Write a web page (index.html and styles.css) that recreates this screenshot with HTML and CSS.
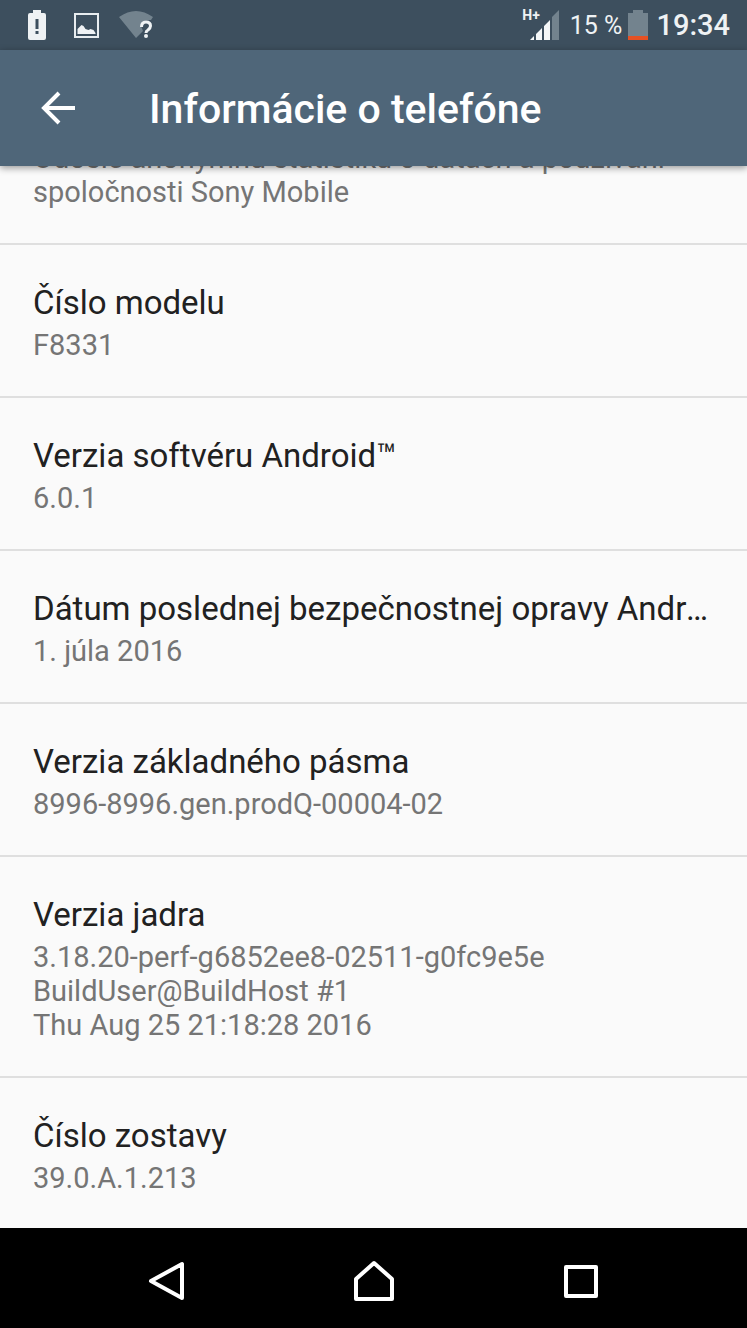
FILE: index.html
```html
<!DOCTYPE html>
<html lang="sk">
<head>
<meta charset="utf-8">
<meta name="viewport" content="width=device-width, initial-scale=1">
<title>Informácie o telefóne</title>
<link rel="stylesheet" href="styles.css">
</head>
<body class="screen">
<div class="status-bar">
  <div class="status-group notifications">
    <svg width="18" height="30" viewBox="0 0 18 30" aria-label="Batéria"><path fill="#eff2f4" fill-rule="evenodd" d="M5 0h8v3h3q2 0 2 2v23q0 2-2 2H2q-2 0-2-2V5q0-2 2-2h3zM7.500 9h3v10h-3zM7.500 21h3v3h-3z"/></svg>
    <svg width="25" height="25" viewBox="0 0 25 25" aria-label="Obrázok"><path fill="none" stroke="#e8edf0" stroke-width="2" d="M1 1h23v23H1z"/><path fill="#eff2f4" d="M3.500 21v-5l3-3 1-1 2 1 2 3 3 1 2-1 3 1 2 3v1z"/></svg>
    <svg width="36" height="28" viewBox="0 0 36 28" aria-label="Wi-Fi"><path fill="#73838e" d="M0 6Q17-6 34 6L32 9q-9-1-10 6l2 5-7 7z"/><path fill="none" stroke="#eff2f4" stroke-width="3" d="M22.500 16q0-5 4.500-5t4.500 4q0 2-2.500 4-2 1-2 3"/><circle cx="27" cy="25" r="2" fill="#eff2f4"/></svg>
  </div>
  <div class="status-group indicators">
    <div class="signal">
      <span class="network">H+</span>
      <svg width="30" height="30" viewBox="0 0 30 30" aria-label="Signál"><path fill="#f5f7f8" d="M4 26v4H0zM12 18v12H6v-6zM20 10v20h-6V16z"/><path fill="#73838e" d="M29 0v30h-7V7z"/></svg>
    </div>
    <span class="percent">15 %</span>
    <svg width="20" height="30" viewBox="0 0 20 30" aria-label="Slabá batéria"><path fill="#73838e" d="M5 0h10v3h5v23H0V3h5z"/><path fill="#e65124" d="M0 26h20v4H0z"/></svg>
    <time class="clock">19:34</time>
  </div>
</div>
<header class="app-bar">
  <button class="back" type="button" aria-label="Späť"><svg width="34" height="34" viewBox="0 0 34 34" fill="none" stroke="#fff" stroke-width="4"><path d="M34 17H3M18 2L3 17l15 15"/></svg></button>
  <h1 class="heading">Informácie o telefóne</h1>
</header>
<main class="list">
  <section class="item"><p class="summary">Odošle anonymnú štatistiku o dátach a používaní spoločnosti Sony Mobile</p></section>
  <section class="item"><h2 class="title">Číslo modelu</h2><p class="summary">F8331</p></section>
  <section class="item"><h2 class="title">Verzia softvéru Android™</h2><p class="summary">6.0.1</p></section>
  <section class="item"><h2 class="title">Dátum poslednej bezpečnostnej opravy Androidu</h2><p class="summary">1. júla 2016</p></section>
  <section class="item"><h2 class="title">Verzia základného pásma</h2><p class="summary">8996-8996.gen.prodQ-00004-02</p></section>
  <section class="item"><h2 class="title">Verzia jadra</h2><p class="summary">3.18.20-perf-g6852ee8-02511-g0fc9e5e<br>BuildUser@BuildHost #1<br>Thu Aug 25 21:18:28 2016</p></section>
  <section class="item"><h2 class="title">Číslo zostavy</h2><p class="summary">39.0.A.1.213</p></section>
</main>
<nav class="nav-bar">
  <button class="nav-button" type="button" aria-label="Späť"><svg width="42" height="42" viewBox="0 0 42 42"><path d="M36 4v34L5 21z"/></svg></button>
  <button class="nav-button" type="button" aria-label="Domov"><svg width="42" height="42" viewBox="0 0 42 42"><path d="M21 3l18 16v20H3V19z"/></svg></button>
  <button class="nav-button" type="button" aria-label="Prehľad"><svg width="42" height="42" viewBox="0 0 42 42"><path d="M6 7h30v29H6z"/></svg></button>
</nav>
</body>
</html>
```
FILE: styles.css
```css
* {
  box-sizing: border-box;
}

.screen {
  display: flex;
  flex-direction: column;
  height: 100vh;
  margin: 0;
  background: #fafafa;
  font-family: Roboto, "Noto Sans", sans-serif;
}

.status-bar {
  display: flex;
  align-items: center;
  justify-content: space-between;
  flex: none;
  height: 50px;
  padding: 0 17px 0 28px;
  background: #3d4f5e;
  color: #eff2f4;
}

.status-group {
  display: flex;
  align-items: center;
}

.notifications {
  gap: 28px;
}

.notifications svg:last-child {
  margin-left: -8px;
}

.indicators {
  gap: 6px;
}

.signal {
  display: flex;
  align-items: flex-start;
}

.network {
  margin-right: -10px;
  font-size: 14px;
  font-weight: 700;
  line-height: 10px;
}

.percent {
  margin-left: 4px;
  font-size: 25px;
}

.clock {
  margin-left: 2px;
  font-size: 29px;
  font-weight: 500;
}

.app-bar {
  display: flex;
  align-items: center;
  flex: none;
  position: relative;
  height: 116px;
  padding: 0 34px 0 41px;
  gap: 74px;
  background: #4f6679;
  box-shadow: 0 2px 7px rgba(0, 0, 0, 0.4);
}

.back,
.nav-button {
  display: flex;
  align-items: center;
  justify-content: center;
  padding: 0;
  border: 0;
  background: none;
}

.heading {
  margin: 0;
  padding-top: 2px;
  color: #fff;
  font-size: 41px;
  font-weight: 500;
}

.list {
  display: flex;
  flex-direction: column;
  justify-content: flex-end;
  flex: 1;
  min-height: 0;
  overflow: hidden;
}

.item {
  flex: none;
  padding: 38px 33px 34px;
  border-bottom: 2px solid #dfdfdf;
}

.item:last-child {
  padding-bottom: 33px;
  border-bottom: 0;
}

.title {
  margin: 0 0 5px;
  overflow: hidden;
  color: #212121;
  font-size: 33px;
  font-weight: 400;
  line-height: 40px;
  text-overflow: ellipsis;
  white-space: nowrap;
}

.summary {
  margin: 0;
  color: #757575;
  font-size: 29px;
  line-height: 34px;
}

.nav-bar {
  display: flex;
  justify-content: center;
  flex: none;
  height: 100px;
  background: #000;
}

.nav-button {
  flex: 0 1 207px;
  padding-top: 6px;
}

.nav-button path {
  fill: none;
  stroke: #fff;
  stroke-width: 4;
  stroke-linejoin: round;
}
```
